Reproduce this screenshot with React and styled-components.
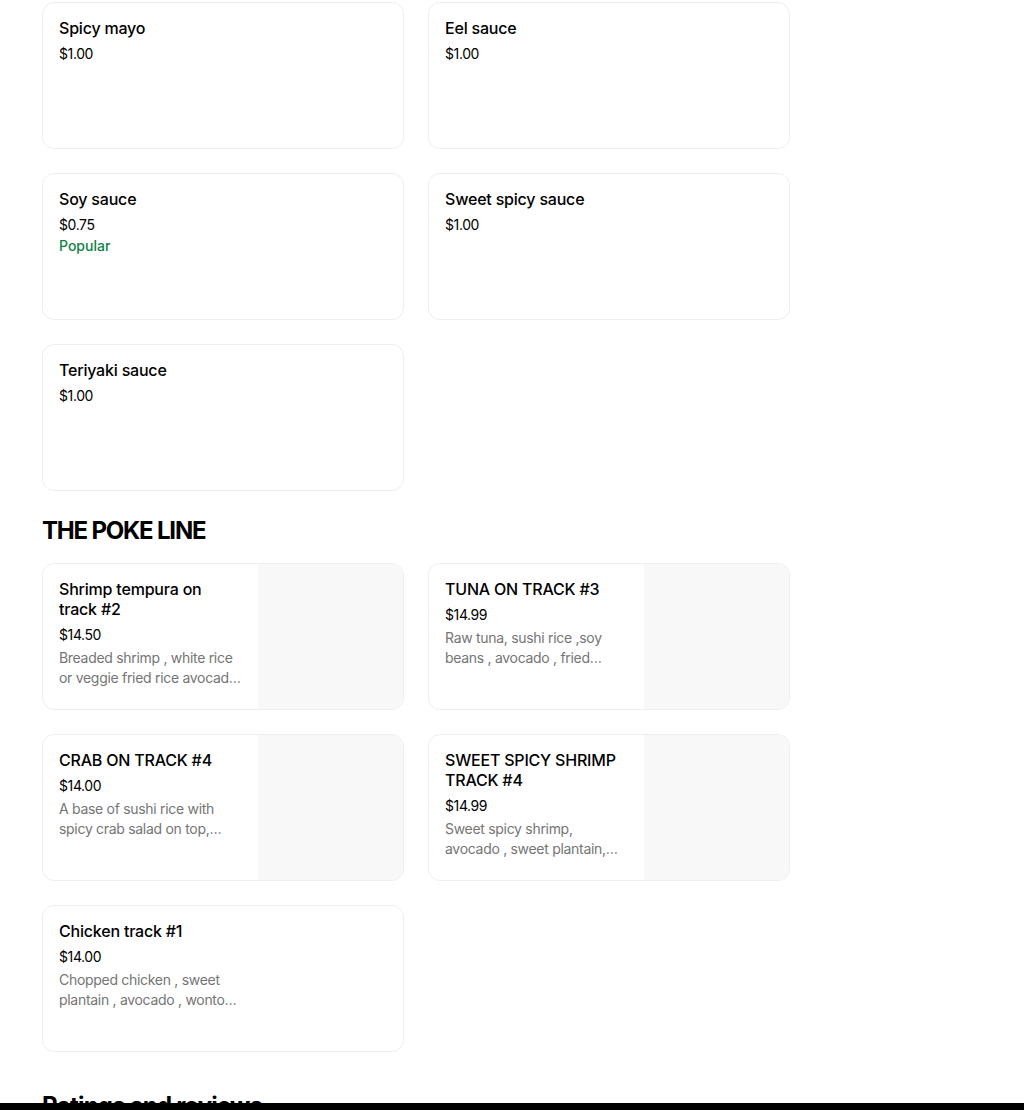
import React from "react";
import styled, { createGlobalStyle } from "styled-components";

const Global = createGlobalStyle`
  html, body { margin: 0; padding: 0; background: #fff; }
  body { font-family: Inter, "Noto Sans", "Liberation Sans", sans-serif; color: #000; }
  * { box-sizing: border-box; }
`;

const Page = styled.main`
  padding: 2px 0 40px 42px;
  width: 1024px;
`;

const Section = styled.section`
  display: flex;
  flex-direction: column;
  & + & { margin-top: 24px; }
`;

const SectionTitle = styled.h2`
  margin: 0 0 16px 0;
  font-size: 24px;
  line-height: 32px;
  font-weight: 700;
  letter-spacing: -1.2px;
`;

const Grid = styled.div`
  display: grid;
  grid-template-columns: 362px 362px;
  gap: 24px;
`;

const Card = styled.div`
  display: flex;
  height: 147px;
  border: 1px solid #eeeeee;
  border-radius: 12px;
  overflow: hidden;
  background: #fff;
`;

const Info = styled.div`
  flex: 1;
  min-width: 0;
  padding: 15px 16px 16px 16px;
  display: flex;
  flex-direction: column;
`;

const NarrowInfo = styled(Info)`
  flex: none;
  width: 215px;
`;

const Title = styled.div`
  font-size: 16px;
  line-height: 20px;
  font-weight: 500;
  letter-spacing: -0.2px;
`;

const Price = styled.div`
  margin-top: 6px;
  font-size: 14px;
  line-height: 20px;
  font-weight: 400;
  letter-spacing: -0.4px;
`;

const Popular = styled.div`
  margin-top: 1px;
  font-size: 14px;
  line-height: 20px;
  font-weight: 500;
  color: #0e8345;
`;

const Desc = styled.div`
  margin-top: 3px;
  font-size: 14px;
  line-height: 20px;
  color: #757575;
  letter-spacing: -0.3px;
  display: -webkit-box;
  -webkit-line-clamp: 2;
  -webkit-box-orient: vertical;
  overflow: hidden;
`;

const Thumb = styled.div`
  width: 145px;
  flex: none;
  background: #f8f8f8;
`;

const BottomTitle = styled.h2`
  margin: 38px 0 0 0;
  font-size: 24px;
  line-height: 32px;
  font-weight: 700;
  letter-spacing: -0.8px;
`;

const BottomBar = styled.div`
  position: fixed;
  left: 0;
  right: 0;
  bottom: 0;
  height: 7px;
  background: #000;
`;

const sauces = [
  { title: "Spicy mayo", price: "$1.00" },
  { title: "Eel sauce", price: "$1.00" },
  { title: "Soy sauce", price: "$0.75", popular: true },
  { title: "Sweet spicy sauce", price: "$1.00" },
  { title: "Teriyaki sauce", price: "$1.00" },
];

const poke = [
  {
    title: "Shrimp tempura on track #2",
    price: "$14.50",
    desc: "Breaded shrimp , white rice or veggie fried rice avocado , sweet plantain , wonton strips",
    img: true,
  },
  {
    title: "TUNA ON TRACK #3",
    price: "$14.99",
    desc: "Raw tuna, sushi rice ,soy beans , avocado , fried onions , seaweed salad",
    img: true,
  },
  {
    title: "CRAB ON TRACK #4",
    price: "$14.00",
    desc: "A base of sushi rice with spicy crab salad on top, avocado and cucumber",
    img: true,
  },
  {
    title: "SWEET SPICY SHRIMP TRACK #4",
    price: "$14.99",
    desc: "Sweet spicy shrimp, avocado , sweet plantain, wonton strips and rice",
    img: true,
  },
  {
    title: "Chicken track #1",
    price: "$14.00",
    desc: "Chopped chicken , sweet plantain , avocado , wonton strips and rice",
    img: false,
    narrow: true,
  },
];

function Item({ item }) {
  const Body = item.narrow ? NarrowInfo : Info;
  return (
    <Card>
      <Body>
        <Title>{item.title}</Title>
        <Price>{item.price}</Price>
        {item.popular && <Popular>Popular</Popular>}
        {item.desc && <Desc>{item.desc}</Desc>}
      </Body>
      {item.img && <Thumb />}
    </Card>
  );
}

export default function App() {
  return (
    <>
      <Global />
      <Page>
        <Section>
          <Grid>
            {sauces.map((s) => (
              <Item key={s.title} item={s} />
            ))}
          </Grid>
        </Section>
        <Section>
          <SectionTitle>THE POKE LINE</SectionTitle>
          <Grid>
            {poke.map((s) => (
              <Item key={s.title} item={s} />
            ))}
          </Grid>
        </Section>
        <BottomTitle>Ratings and reviews</BottomTitle>
      </Page>
      <BottomBar />
    </>
  );
}
